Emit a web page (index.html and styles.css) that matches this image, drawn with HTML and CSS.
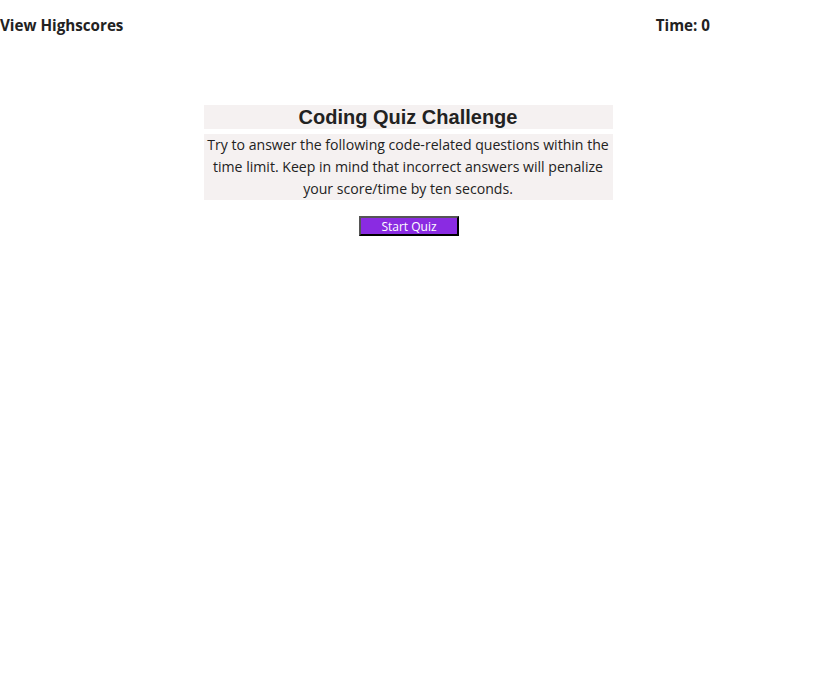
FILE: index.html
```html
<!DOCTYPE html>
<html>
<head>
<meta charset="utf-8">
<link rel="stylesheet" href="styles.css">
</head>
<body>
<header class="top">
  <a class="highscores">View Highscores</a>
  <div class="timer">Time: <span>0</span></div>
</header>
<main class="quiz">
  <h1 class="title">Coding Quiz Challenge</h1>
  <p class="intro">Try to answer the following code-related questions within the time limit. Keep in mind that incorrect answers will penalize your score/time by ten seconds.</p>
  <button class="start">Start Quiz</button>
</main>
</body>
</html>
```
FILE: styles.css
```css
html, body {
  margin: 0;
  padding: 0;
  background: #fff;
  font-family: "Open Sans", "Noto Sans", sans-serif;
  color: #222;
}
.top {
  display: flex;
  justify-content: space-between;
  align-items: center;
  height: 50px;
  padding-right: 106px;
  font-weight: bold;
  font-size: 15.2px;
}
.highscores {
  color: #222;
}
.quiz {
  width: 409px;
  margin: 55px auto 0;
  display: flex;
  flex-direction: column;
  align-items: center;
}
.title {
  align-self: stretch;
  margin: 0;
  background: #f5f1f1;
  font-family: "Liberation Sans", Arial, sans-serif;
  font-size: 20px;
  text-align: center;
  line-height: 24px;
  height: 24px;
}
.intro {
  align-self: stretch;
  margin: 5px 0 0;
  background: #f5f1f1;
  text-align: center;
  font-size: 14.1px;
  line-height: 22px;
}
.start {
  margin: 16px 0 0 2px;
  width: 100px;
  height: 20px;
  padding: 0;
  background: #8a2be2;
  color: #fff;
  font-family: "Open Sans", sans-serif;
  font-size: 12px;
  border: 2px outset #555;
  border-right-color: #222;
  border-bottom-color: #222;
}
```
